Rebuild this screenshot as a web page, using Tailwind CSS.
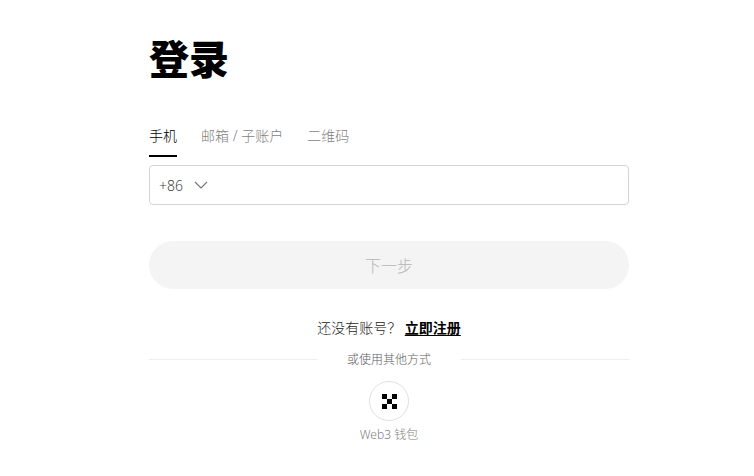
<!doctype html>
<html lang="zh">
  <head>
    <meta charset="UTF-8" />
    <title>登录</title>
    <script src="https://cdn.jsdelivr.net/npm/@tailwindcss/browser@4"></script>
  </head>
  <body class="bg-white text-black font-['Noto_Sans','Noto_Sans_CJK_SC',sans-serif] font-light h-[476px] overflow-hidden">
    <main class="w-[480px] ml-[149px] pt-[29px]">
      <h1 class="text-[40px] leading-[60px] font-black">登录</h1>

      <div class="flex gap-6 mt-[24px] h-[44px] text-sm text-[#7f7f7f]">
        <a class="h-[44px] pt-[13px] leading-5 text-black border-b-2 border-black">手机</a>
        <a class="pt-[13px] leading-5">邮箱 / 子账户</a>
        <a class="pt-[13px] leading-5">二维码</a>
      </div>

      <div class="flex items-center h-10 mt-2 px-[9px] border border-[#d4d4d4] rounded text-sm text-[#3f3f3f]">
        <span class="pt-[1px]">+86</span>
        <svg xmlns="http://www.w3.org/2000/svg" width="14" height="8" viewBox="0 0 14 8" fill="none" stroke="#777" stroke-width="1.2" class="ml-[11px]">
          <path d="M1 1l6 6 6-6"/>
        </svg>
      </div>

      <button class="block w-full h-12 mt-9 pt-[1px] rounded-full bg-[#f4f4f4] text-base text-[#b5b5b5]">下一步</button>

      <p class="mt-[28px] pt-[1px] leading-5 text-sm text-center text-[#222]">
        还没有账号？ <a class="font-bold text-black underline underline-offset-2">立即注册</a>
      </p>

      <div class="flex items-center gap-[30px] mt-[11px] h-5 text-xs text-[#5c5c5c]">
        <div class="flex-1 border-t border-[#eeeeee]"></div>
        <span class="pt-[2px]">或使用其他方式</span>
        <div class="flex-1 border-t border-[#eeeeee]"></div>
      </div>

      <div class="flex flex-col items-center mt-[12px]">
        <div class="flex items-center justify-center size-10 rounded-full border border-[#e0e0e0]">
          <svg xmlns="http://www.w3.org/2000/svg" width="15" height="15" viewBox="0 0 15 15" fill="#000">
            <rect x="0" y="0" width="5" height="5"/>
            <rect x="10" y="0" width="5" height="5"/>
            <rect x="5" y="5" width="5" height="5"/>
            <rect x="0" y="10" width="5" height="5"/>
            <rect x="10" y="10" width="5" height="5"/>
          </svg>
        </div>
        <span class="mt-[4px] text-xs leading-5 text-[#808080]">Web3 钱包</span>
      </div>
    </main>
  </body>
</html>
